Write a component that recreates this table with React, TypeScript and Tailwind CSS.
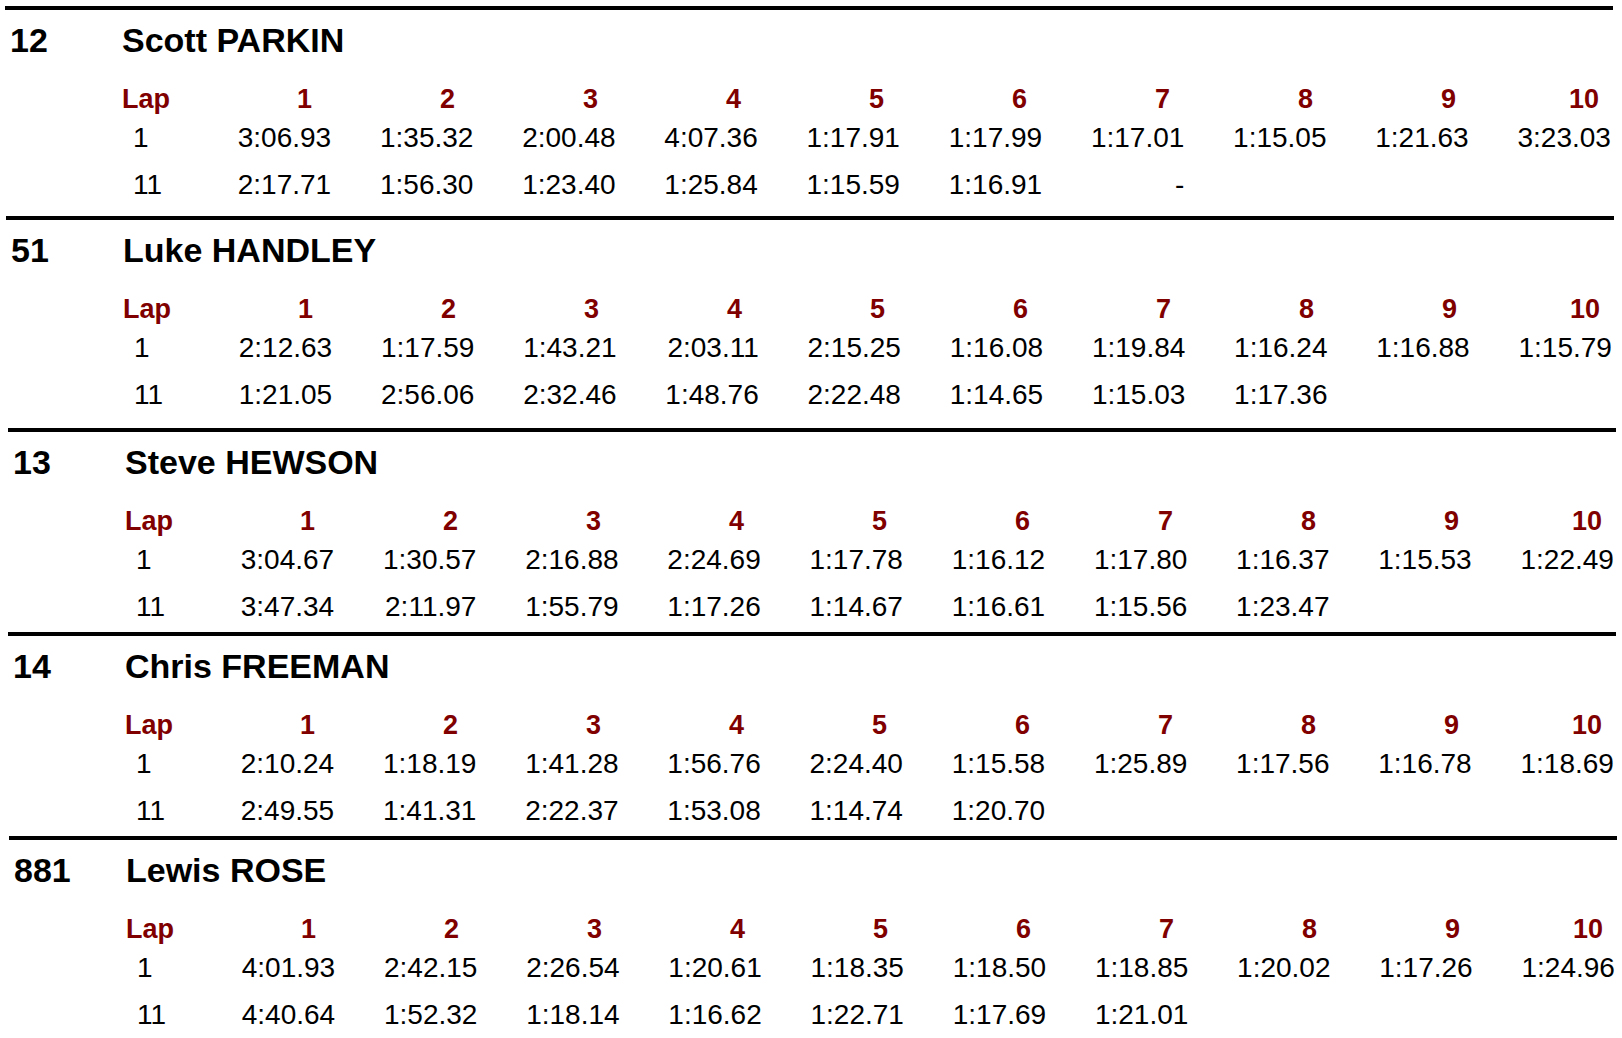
type Driver = {
  no: string;
  name: string;
  first: string[];
  second: string[];
  box: string; // offset + height of the block, the scan drifts a little
};

const drivers: Driver[] = [
  {
    no: "12",
    name: "Scott PARKIN",
    first: ["3:06.93", "1:35.32", "2:00.48", "4:07.36", "1:17.91", "1:17.99", "1:17.01", "1:15.05", "1:21.63", "3:23.03"],
    second: ["2:17.71", "1:56.30", "1:23.40", "1:25.84", "1:15.59", "1:16.91", "-"],
    box: "ml-[5px] h-[210px]",
  },
  {
    no: "51",
    name: "Luke HANDLEY",
    first: ["2:12.63", "1:17.59", "1:43.21", "2:03.11", "2:15.25", "1:16.08", "1:19.84", "1:16.24", "1:16.88", "1:15.79"],
    second: ["1:21.05", "2:56.06", "2:32.46", "1:48.76", "2:22.48", "1:14.65", "1:15.03", "1:17.36"],
    box: "ml-[6px] h-[212px]",
  },
  {
    no: "13",
    name: "Steve HEWSON",
    first: ["3:04.67", "1:30.57", "2:16.88", "2:24.69", "1:17.78", "1:16.12", "1:17.80", "1:16.37", "1:15.53", "1:22.49"],
    second: ["3:47.34", "2:11.97", "1:55.79", "1:17.26", "1:14.67", "1:16.61", "1:15.56", "1:23.47"],
    box: "ml-[8px] h-[204px]",
  },
  {
    no: "14",
    name: "Chris FREEMAN",
    first: ["2:10.24", "1:18.19", "1:41.28", "1:56.76", "2:24.40", "1:15.58", "1:25.89", "1:17.56", "1:16.78", "1:18.69"],
    second: ["2:49.55", "1:41.31", "2:22.37", "1:53.08", "1:14.74", "1:20.70"],
    box: "ml-[8px] h-[204px]",
  },
  {
    no: "881",
    name: "Lewis ROSE",
    first: ["4:01.93", "2:42.15", "2:26.54", "1:20.61", "1:18.35", "1:18.50", "1:18.85", "1:20.02", "1:17.26", "1:24.96"],
    second: ["4:40.64", "1:52.32", "1:18.14", "1:16.62", "1:22.71", "1:17.69", "1:21.01"],
    box: "ml-[9px] h-[205px]",
  },
];

const laps = ["1", "2", "3", "4", "5", "6", "7", "8", "9", "10"];

function TimeRow({ lap, times }: { lap: string; times: string[] }) {
  return (
    <div className="shrink-0 grid grid-cols-[56px_repeat(10,142.2px)] pl-[128px] h-[47px] items-center text-[28px] leading-[47px] text-black">
      <div>{lap}</div>
      {times.map((t, i) => (
        <div key={i} className="text-right whitespace-nowrap">
          {t}
        </div>
      ))}
    </div>
  );
}

function DriverBlock({ d }: { d: Driver }) {
  return (
    <section className={`w-[1608px] flex flex-col ${d.box}`}>
      <div className="shrink-0 h-[4px] bg-black" />

      {/* number + name */}
      <div className="shrink-0 flex mt-[13px] h-[34px] items-center text-[34px] leading-[34px] font-bold text-black whitespace-nowrap">
        <div className="w-[117px] pl-[5px]">{d.no}</div>
        <div>{d.name}</div>
      </div>

      {/* lap header */}
      <div className="shrink-0 grid grid-cols-[47px_repeat(10,143px)] pl-[117px] mt-[27px] h-[30px] items-center text-[27px] leading-[30px] font-bold text-[#800000]">
        <div>Lap</div>
        {laps.map((l) => (
          <div key={l} className="text-right">
            {l}
          </div>
        ))}
      </div>

      <TimeRow lap="1" times={d.first} />
      <TimeRow lap="11" times={d.second} />
    </section>
  );
}

export default function App() {
  return (
    <div
      className="w-[1622px] h-[1038px] bg-white pt-[6px] overflow-hidden"
      style={{ fontFamily: '"Liberation Sans", Arial, sans-serif' }}
    >
      {drivers.map((d) => (
        <DriverBlock key={d.no} d={d} />
      ))}
    </div>
  );
}
